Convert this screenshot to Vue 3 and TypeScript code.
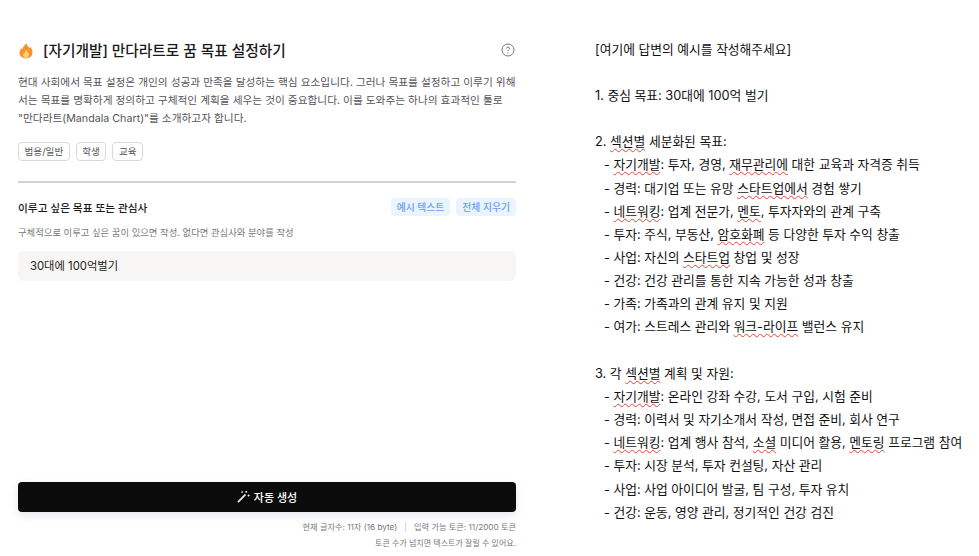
<template>
  <div class="page">
    <section class="form">
      <header class="title-row">
        <svg class="fire" viewBox="0 0 16 16" width="16" height="16" aria-hidden="true">
          <path d="M8.6 .6c.5 2.300 2 3.200 3 4.700.3-.6.4-1.100.4-1.700 1.500 1.600 2.500 3.600 2.500 5.900 0 3.600-2.900 5.900-6.500 5.900S1.500 13.100 1.500 9.700c0-1.900.8-3.400 1.900-4.800.1.800.4 1.400.9 1.900C4.500 4.300 6.300 2.100 8.600 .6z" fill="#f59331" />
          <path d="M8.200 7c.3 1.300 1.300 1.900 2 2.800.5.700.8 1.400.8 2.200 0 1.800-1.300 3-3 3s-3-1.200-3-2.900c0-.9.400-1.600 1-2.300.1.400.3.700.6.900C6.700 8.600 7.300 7.700 8.200 7z" fill="#fcd272" />
        </svg>
        <h1>[자기개발] 만다라트로 꿈 목표 설정하기</h1>
        <svg class="help" viewBox="0 0 14 14" width="14" height="14" aria-hidden="true">
          <circle cx="7" cy="7" r="6" fill="none" stroke="#77777a" stroke-width="1" />
          <path d="M5.400 5.500C5.500 4.600 6.200 4.100 7 4.100c.9 0 1.600.6 1.600 1.400 0 1.200-1.600 1.300-1.600 2.500" fill="none" stroke="#77777a" stroke-width="1" />
          <circle cx="7" cy="9.900" r=".6" fill="#77777a" />
        </svg>
      </header>

      <p class="desc">
        현대 사회에서 목표 설정은 개인의 성공과 만족을 달성하는 핵심 요소입니다. 그러나 목표를 설정하고 이루기 위해<br />
        서는 목표를 명확하게 정의하고 구체적인 계획을 세우는 것이 중요합니다. 이를 도와주는 하나의 효과적인 툴로<br />
        "만다라트(Mandala Chart)"를 소개하고자 합니다.
      </p>

      <div class="tags">
        <span v-for="tag in tags" :key="tag" class="tag">{{ tag }}</span>
      </div>

      <hr class="divider" />

      <div class="field-head">
        <label class="field-label">이루고 싶은 목표 또는 관심사</label>
        <div class="field-actions">
          <button class="soft-btn">예시 텍스트</button>
          <button class="soft-btn">전체 지우기</button>
        </div>
      </div>
      <p class="helper">구체적으로 이루고 싶은 꿈이 있으면 작성. 없다면 관심사와 분야를 작성</p>
      <div class="input">30대에 100억벌기</div>

      <div class="spacer"></div>

      <button class="generate">
        <svg viewBox="0 0 14 14" width="13" height="13" aria-hidden="true">
          <path d="M1.500 12.500 8.500 5.500" stroke="#e8e8e8" stroke-width="2" stroke-linecap="round" />
          <path d="M10 1v2M9 2h2M12.500 5v2M11.500 6h2M5.500 1.500v1.500M4.800 2.200h1.500" stroke="#fff" stroke-width="1" fill="none" />
        </svg>
        자동 생성
      </button>
      <div class="meta">
        <div>현재 글자수: 11자 (16 byte)<span class="sep">|</span>입력 가능 토큰: 11/2000 토큰</div>
        <div class="meta-note">토큰 수가 넘치면 텍스트가 잘릴 수 있어요.</div>
      </div>
    </section>

    <section class="sample">
      <div v-for="(line, i) in lines" :key="i" class="line" :class="{ indent: line.indent }">
        <template v-for="(part, j) in line.parts" :key="j">
          <span v-if="part.wavy" class="wavy">{{ part.text }}</span>
          <template v-else>{{ part.text }}</template>
        </template>
      </div>
    </section>
  </div>
</template>

<script setup lang="ts">
interface Part {
  text: string;
  wavy: boolean;
}

const tags = ['범용/일반', '학생', '교육'];

// ~단어~ marks a word with the spell-check underline
const raw = [
  '[여기에 답변의 예시를 작성해주세요]',
  '',
  '1. 중심 목표: 30대에 100억 벌기',
  '',
  '2. ~섹션별~ 세분화된 목표:',
  '  - ~자기개발~: 투자, 경영, ~재무관리에~ 대한 교육과 자격증 취득',
  '  - 경력: 대기업 또는 유망 ~스타트업에서~ 경험 쌓기',
  '  - ~네트워킹~: 업계 전문가, ~멘토~, 투자자와의 관계 구축',
  '  - 투자: 주식, 부동산, ~암호화폐~ 등 다양한 투자 수익 창출',
  '  - 사업: 자신의 ~스타트업~ 창업 및 성장',
  '  - 건강: 건강 관리를 통한 지속 가능한 성과 창출',
  '  - 가족: 가족과의 관계 유지 및 지원',
  '  - 여가: 스트레스 관리와 ~워크-라이프~ 밸런스 유지',
  '',
  '3. 각 ~섹션별~ 계획 및 자원:',
  '  - ~자기개발~: 온라인 강좌 수강, 도서 구입, 시험 준비',
  '  - 경력: 이력서 및 자기소개서 작성, 면접 준비, 회사 연구',
  '  - ~네트워킹~: 업계 행사 참석, ~소셜~ 미디어 활용, ~멘토링~ 프로그램 참여',
  '  - 투자: 시장 분석, 투자 컨설팅, 자산 관리',
  '  - 사업: 사업 아이디어 발굴, 팀 구성, 투자 유치',
  '  - 건강: 운동, 영양 관리, 정기적인 건강 검진',
];

const lines = raw.map((text) => {
  const indent = text.startsWith('  ');
  const parts: Part[] = text
    .trim()
    .split('~')
    .map((chunk, i) => ({ text: chunk, wavy: i % 2 === 1 }));
  return { indent, parts };
});
</script>

<style>
html,
body {
  margin: 0;
  background: #fff;
}
</style>

<style scoped>
.page {
  display: flex;
  width: 979px;
  height: 556px;
  overflow: hidden;
  font-family: Inter, "Noto Sans CJK KR", sans-serif;
  color: #111;
}

.form {
  display: flex;
  flex-direction: column;
  flex: none;
  width: 498px;
  margin-left: 18px;
  padding-top: 41px;
  box-sizing: border-box;
}

.title-row {
  display: flex;
  align-items: center;
  height: 20px;
}

.fire {
  flex: none;
  margin-right: 9px;
}

.title-row h1 {
  flex: 1;
  margin: 0;
  font-size: 14.7px;
  font-weight: 500;
  line-height: 20px;
  color: #1a1a1a;
}

.help {
  flex: none;
  margin-top: -3px;
  margin-right: 1px;
}

.desc {
  margin: 13px 0 0;
  font-size: 10.7px;
  line-height: 18px;
  color: #55555a;
  white-space: nowrap;
}

.tags {
  display: flex;
  gap: 6px;
  margin-top: 14px;
}

.tag {
  padding: 0 5.5px;
  height: 17px;
  line-height: 17px;
  border: 1px solid #dad9d5;
  border-radius: 4px;
  font-size: 9.6px;
  color: #55555a;
}

.divider {
  width: 100%;
  height: 2px;
  margin: 20px 0 0;
  border: 0;
  background: #d3d2cc;
}

.field-head {
  display: flex;
  align-items: center;
  justify-content: space-between;
  margin-top: 15px;
}

.field-label {
  font-size: 10.7px;
  font-weight: 500;
  color: #1a1a1a;
}

.field-actions {
  display: flex;
  gap: 6px;
}

.soft-btn {
  height: 18px;
  padding: 0 6px;
  border: 0;
  border-radius: 4px;
  background: #eaf4fe;
  color: #6d9ff0;
  font-family: inherit;
  font-size: 9.8px;
  font-weight: 500;
}

.helper {
  margin: 10px 0 0;
  font-size: 9.35px;
  line-height: 14px;
  color: #77777a;
}

.input {
  height: 30px;
  margin-top: 11px;
  padding-left: 12px;
  border-radius: 6px;
  background: #f7f6f4;
  font-size: 11.3px;
  line-height: 30px;
  color: #222;
}

.spacer {
  flex: 1;
}

.generate {
  display: flex;
  align-items: center;
  justify-content: center;
  gap: 4px;
  flex: none;
  height: 30px;
  padding-bottom: 2px;
  border: 0;
  border-radius: 4px;
  background: #0b0b0b;
  box-shadow: 0 3px 8px rgba(60, 70, 110, 0.14);
  color: #fff;
  font-family: inherit;
  font-size: 11px;
  font-weight: 500;
}

.meta {
  margin: 7px 0 5px;
  font-size: 8.2px;
  line-height: 16px;
  color: #77777a;
  text-align: right;
}

.meta-note {
  font-size: 8px;
}

.sep {
  margin: 0 7px;
  color: #c4c4c4;
}

.sample {
  flex: 1;
  margin-left: 79px;
  padding-top: 37.6px;
  font-size: 12.78px;
  line-height: 23.15px;
  color: #111;
}

.line {
  min-height: 23.15px;
  white-space: pre;
}

.line.indent {
  padding-left: 9px;
}

.wavy {
  text-decoration: underline wavy #e0453a 1px;
  text-underline-offset: 2px;
}
</style>
